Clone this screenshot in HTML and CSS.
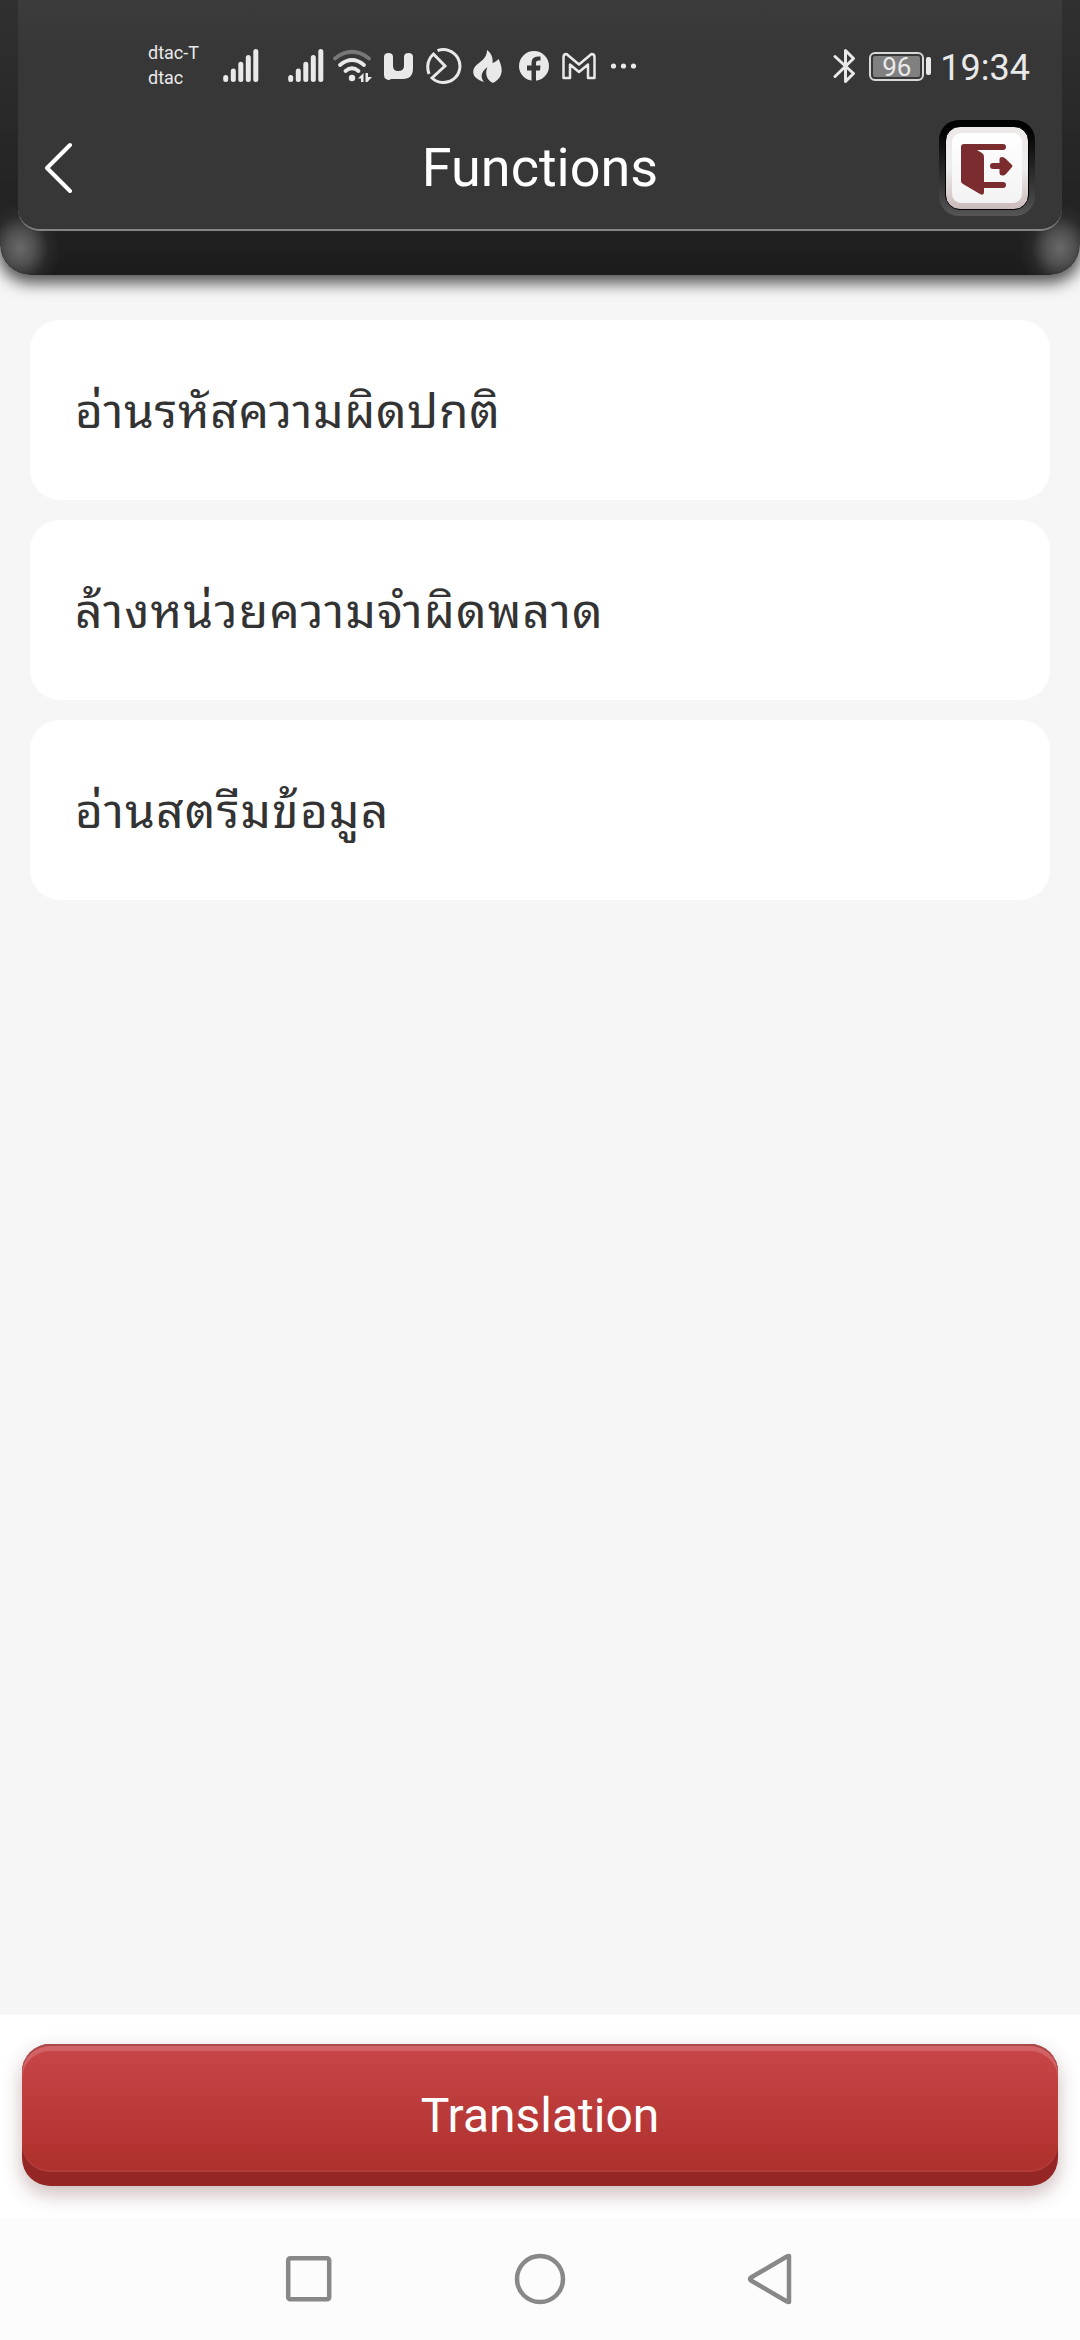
FILE: index.html
```html
<!DOCTYPE html>
<html lang="th">
<head>
<meta charset="utf-8">
<title>Functions</title>
<link rel="stylesheet" href="styles.css">
</head>
<body>
<div class="screen">
  <header class="header">
    <div class="panel">
      <div class="status">
        <div class="carriers"><span>dtac-T</span><span>dtac</span></div>
        <svg class="signal" width="36" height="40" viewBox="0 0 36 40" stroke="#e9e9e9" stroke-width="5" stroke-linecap="round"><path d="M2.700 31.500v2.100M10.300 25v8.600M17.800 18.200v15.400M25.300 11.500v22.100M32.800 5.500v28.100"/></svg>
        <svg class="signal second" width="36" height="40" viewBox="0 0 36 40" stroke="#e9e9e9" stroke-width="5" stroke-linecap="round"><path d="M2.700 31.500v2.100M10.300 25v8.600M17.800 18.200v15.400M25.300 11.500v22.100M32.800 5.500v28.100"/></svg>
        <svg class="wifi" width="40" height="40" viewBox="0 0 40 40" fill="none" stroke="#e9e9e9" stroke-width="3.800" stroke-linecap="round"><path stroke="#777" d="M2 12.500Q19 -1 36 12.500"/><path d="M7 19Q19 9 31 19M12.500 25Q19 19.500 25.500 25"/><circle cx="19" cy="32" r="3.200" fill="#e9e9e9" stroke="none"/><path fill="#e9e9e9" stroke="none" d="M25 32.500L30.500 27V36H28V32.500ZM32.500 27H35V31H39L34.500 36H32.500Z"/></svg>
        <svg class="letter-mark" width="30" height="40" viewBox="0 0 30 40"><path fill="#e9e9e9" d="M4.500 7Q9 7 9 11V20Q9 25 14 25Q20 25 20 20V11Q20 7 24.500 7Q29 7 29 11V22Q29 33 19 33H9L7 33Q5 35 2 33Q0 32 0 29V11Q0 7 4.500 7Z"/></svg>
        <svg class="dial" width="38" height="40" viewBox="0 0 38 40" fill="none" stroke="#e9e9e9" stroke-width="3"><path d="M12.500 4.700A16.500 16.500 0 1 1 7 32L20 20L8.500 8Q0 16 4 28"/></svg>
        <svg class="flame" width="32" height="40" viewBox="0 0 32 40"><path fill="#e9e9e9" d="M15 4C20 8 21 12 20.500 17C23 16 25.500 14.500 26.500 13C31 22 32 31 21 37C16 35 12 29 15.500 21C9 26 8 31 12 36C-2 32 -1 22 7 17C12 13 15 10 15 4Z"/></svg>
        <svg class="fb" width="32" height="40" viewBox="0 0 32 40"><circle cx="16" cy="20" r="15" fill="#e9e9e9"/><path fill="#373737" d="M13.500 36V24.500H9V19.500H13.500V17Q13.500 10.500 20 10.500H22.500V14.500H20.500Q18 14.500 18 17V19.500H22.500L22 24.500H18V36Z"/></svg>
        <svg class="mail" width="34" height="40" viewBox="0 0 34 40" fill="none" stroke="#e9e9e9" stroke-width="2.500" stroke-linejoin="round"><path d="M1.500 11Q1.500 8 4.500 8L17 18.500L29.500 8Q32.500 8 32.500 11V32H26V18.500L17 26L8 18.500V32H1.500Z"/></svg>
        <svg class="more" width="28" height="40" viewBox="0 0 28 40" fill="#e9e9e9"><circle cx="3.500" cy="20" r="2.600"/><circle cx="13.500" cy="20" r="2.600"/><circle cx="23.500" cy="20" r="2.600"/></svg>
        <svg class="bluetooth" width="24" height="40" viewBox="0 0 24 40" fill="none" stroke="#e9e9e9" stroke-width="3" stroke-linecap="round" stroke-linejoin="round"><path d="M2 10.500L20.500 27.500L12.500 35.500V4.500L20.500 12.500L2 30.500"/></svg>
        <div class="battery"><span>96</span></div><i class="battery-tip"></i>
        <time class="clock">19:34</time>
      </div>
      <div class="titlebar">
        <svg class="back" width="30" height="54" viewBox="0 0 30 54" fill="none" stroke="#fff" stroke-width="4" stroke-linecap="round" stroke-linejoin="round"><path d="M25 4L2 27L25 50"/></svg>
        <h1>Functions</h1>
        <div class="exit"><div class="exit-key"><div class="exit-face">
          <svg width="54" height="54" viewBox="0 0 54 54" fill="#7b2c2e"><path d="M4 1H43Q46 1 46 4Q46 7 43 7H17L22 10Q24 11 24 14V39H43Q46 39 46 42Q46 45 43 45H24V49Q24 53 20 51L3 41Q1 40 1 38V4Q1 1 4 1Z"/><path d="M33 20H39.500V16Q39.500 14 42 14Q44 14 46 16L52 22Q53 23 52 24L46 31Q44 33 42 32.500Q39.500 32 39.500 30V26H33Q30 26 30 23Q30 20 33 20Z"/></svg>
        </div></div></div>
      </div>
    </div>
  </header>
  <main class="list">
    <div class="card">อ่านรหัสความผิดปกติ</div>
    <div class="card">ล้างหน่วยความจำผิดพลาด</div>
    <div class="card">อ่านสตรีมข้อมูล</div>
  </main>
  <footer class="actions"><button class="translate"><span>Translation</span></button></footer>
  <nav class="nav">
    <svg width="54" height="54" viewBox="0 0 54 54"><rect x="6.200" y="6.200" width="41" height="41" rx="2"/></svg>
    <svg width="54" height="54" viewBox="0 0 54 54"><circle cx="27" cy="27" r="23"/></svg>
    <svg width="54" height="54" viewBox="0 0 54 54"><path d="M45 4V50Q44 50 42 49L7 28.500Q5 27 7 25.500L42 5Q44 4 45 4Z" stroke-linejoin="round"/></svg>
  </nav>
</div>
</body>
</html>
```
FILE: styles.css
```css
* { box-sizing: border-box; }
body { margin: 0; font-family: Roboto, "Noto Sans", sans-serif; }
svg { display: block; flex: none; }
.screen { width: 1080px; height: 2340px; display: flex; flex-direction: column; background: #f6f6f6; overflow: hidden; }
.header {
  height: 275px; padding: 0 18px; border-radius: 0 0 30px 30px; flex: none;
  background:
    radial-gradient(ellipse 40px 46px at 20px 248px, #696969, rgba(90,90,90,.85) 35%, rgba(60,60,60,.35) 70%, transparent),
    radial-gradient(ellipse 40px 46px at 1060px 248px, #696969, rgba(90,90,90,.85) 35%, rgba(60,60,60,.35) 70%, transparent),
    linear-gradient(#303030, #222 220px, #1c1c1c);
  box-shadow: 0 6px 16px 2px rgba(0,0,0,.68);
}
.panel { height: 231px; border-radius: 0 0 22px 22px; border-bottom: 2px solid #858585; background: linear-gradient(#3c3c3c, #373737 50px, #373737); }
.status { height: 112px; padding: 20px 32px 0 130px; display: flex; align-items: center; color: #e9e9e9; }
.carriers { width: 75px; margin-top: -3px; display: flex; flex-direction: column; font-size: 18px; line-height: 25px; }
.second { margin-left: 29px; }
.wifi { margin-left: 9px; }
.letter-mark { margin-left: 11px; }
.dial { margin-left: 11px; }
.flame { margin-left: 9px; }
.fb { margin-left: 14px; }
.mail { margin-left: 12px; }
.more { margin-left: 14px; }
.bluetooth { margin-left: auto; }
.battery { width: 55px; height: 29px; margin-left: 12px; padding: 2px; border: 2px solid #d8d8d8; border-radius: 6px; }
.battery span { display: block; height: 21px; border-radius: 2px; background: #808080; font-size: 26px; line-height: 22px; text-align: center; }
.battery-tip { width: 5px; height: 18px; margin-left: 2px; border-radius: 2px; background: #e9e9e9; }
.clock { margin-left: 9px; padding-top: 3px; font-size: 36px; line-height: 42px; }
.titlebar { height: 112px; padding: 0 27px; display: grid; grid-template-columns: 96px 1fr 96px; align-items: center; }
h1 { margin: 0; font-size: 54px; font-weight: 400; line-height: 64px; text-align: center; color: #fff; }
.exit { width: 96px; height: 96px; padding: 6px; border-radius: 20px; background: linear-gradient(#000 10%, #555); }
.exit-key { width: 84px; height: 84px; padding: 6px; border: 1px solid #000; border-radius: 15px; background: linear-gradient(#eee8e8, #eee 50%, #cbbaba); }
.exit-face { width: 70px; height: 70px; padding-top: 3px; display: grid; place-items: center; border-radius: 9px; background: linear-gradient(#fff, #f3f3f3); }
.list { flex: 1; padding: 45px 30px 0; display: flex; flex-direction: column; gap: 20px; }
.card {
  height: 180px; padding: 0 45px 6px; display: flex; align-items: center; border-radius: 30px; background: #fff; color: #333;
  font: 48px/60px "Noto Sans Thai Looped", "Noto Looped Thai", "Noto Sans Thai UI", "Droid Sans Thai", Loma, Waree, Garuda, "Noto Sans", sans-serif;
  letter-spacing: .65px;
}
.card + .card { letter-spacing: 1.15px; }
.actions { flex: none; height: 203px; padding: 29px 22px 0; background: #fff; }
.translate {
  display: block; width: 100%; height: 142px; padding: 0 0 14px; border: 0; border-radius: 28px; background: #942725;
  box-shadow: 0 8px 20px rgba(90,30,30,.3);
}
.translate span {
  display: grid; place-items: center; height: 128px; padding-top: 15px; border-radius: 28px; color: #fff; font: 48px/56px Roboto, sans-serif;
  background: linear-gradient(#c84649, #ae302c);
  box-shadow: inset 0 2px #a94a4b, inset 0 7px 1px #d26366, inset 0 -2px #b13c39;
}
.nav { flex: none; height: 122px; background: #fcfcfc; display: flex; justify-content: center; align-items: center; gap: 177px; }
.nav svg { fill: none; stroke: #888; stroke-width: 4.5; }
```
